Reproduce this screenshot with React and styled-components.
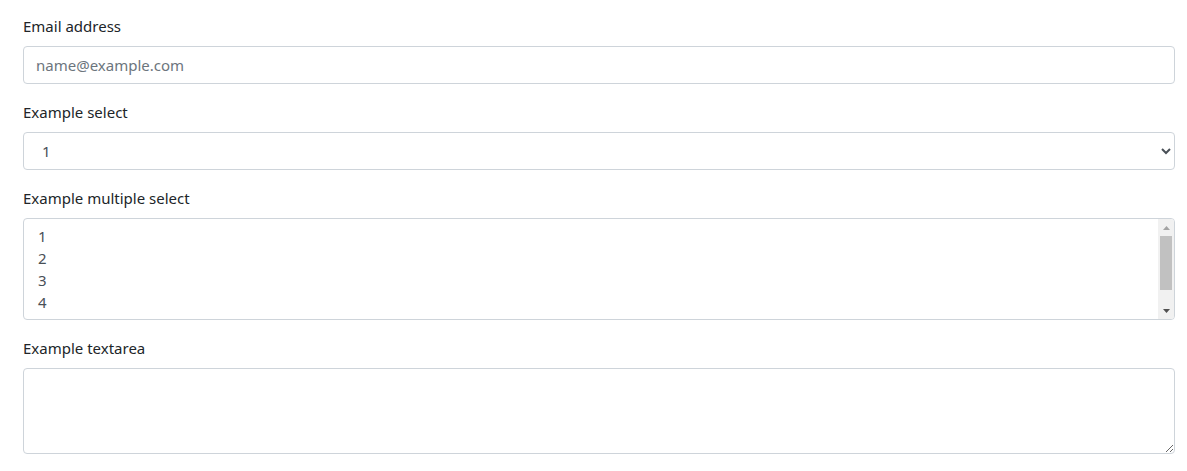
import React from 'react';
import styled, { createGlobalStyle } from 'styled-components';

const GlobalStyle = createGlobalStyle`
  html, body {
    margin: 0;
    background: #fff;
  }
  body {
    font-family: "Segoe UI", "Noto Sans", "Liberation Sans", sans-serif;
    font-size: 16px;
    line-height: 1.5;
    color: #212529;
  }
`;

// 폼 전체
const Container = styled.form`
  padding: 14px 12px 0 23px;
  width: 1152px;
`;

const FormGroup = styled.div`
  margin-bottom: 16px;
`;

const Label = styled.label`
  display: inline-block;
  margin-bottom: 8px;
  font-size: 15px;
  line-height: 24px;
  color: #212529;
`;

const fieldBase = `
  display: block;
  width: 100%;
  box-sizing: border-box;
  padding: 6px 12px;
  font-family: inherit;
  font-size: 15px;
  line-height: 24px;
  color: #495057;
  background-color: #fff;
  border: 1px solid #ced4da;
  border-radius: 4px;
  outline: none;
`;

const Input = styled.input`
  ${fieldBase}
  height: 38px;

  &::placeholder {
    color: #6c757d;
  }
`;

const Select = styled.select`
  ${fieldBase}
  height: 38px;
  padding-left: 14px;
`;

// 다중 선택 리스트박스 (스크롤바 포함)
const ListBox = styled.div`
  ${fieldBase}
  height: 102px;
  padding: 0;
  display: flex;
  overflow: hidden;
`;

const OptionList = styled.div`
  flex: 1;
  padding: 6px 12px;
  overflow: hidden;
`;

const OptionItem = styled.div`
  padding: 0 2px;
  line-height: 22px;
  height: 22px;
  cursor: default;
`;

const ScrollBar = styled.div`
  width: 16px;
  display: flex;
  flex-direction: column;
  background: #f1f1f1;
`;

const ScrollButton = styled.div`
  height: 17px;
  display: flex;
  align-items: center;
  justify-content: center;
`;

const Thumb = styled.div`
  height: 54px;
  margin: 0 2px;
  background: #c1c1c1;
`;

const TrackRest = styled.div`
  flex: 1;
`;

const TextArea = styled.textarea`
  ${fieldBase}
  height: 86px;
  resize: vertical;
`;

const Arrow = ({ up, color }) => (
  <svg width="7" height="4" viewBox="0 0 7 4">
    <path d={up ? 'M0 4L3.5 0L7 4Z' : 'M0 0L3.5 4L7 0Z'} fill={color} />
  </svg>
);

const numbers = ['1', '2', '3', '4', '5'];
// 리스트박스에 보이는 항목 (스크롤 위치 맨 위)
const visibleNumbers = numbers.slice(0, 4);

const App = () => {
  return (
    <>
      <GlobalStyle />
      <Container>
        <FormGroup>
          <Label htmlFor="email">Email address</Label>
          <Input id="email" type="email" placeholder="name@example.com" />
        </FormGroup>

        <FormGroup>
          <Label htmlFor="select1">Example select</Label>
          <Select id="select1">
            {numbers.map((n) => (
              <option key={n}>{n}</option>
            ))}
          </Select>
        </FormGroup>

        <FormGroup>
          <Label id="select2-label">Example multiple select</Label>
          <ListBox role="listbox" aria-multiselectable="true" aria-labelledby="select2-label">
            <OptionList>
              {visibleNumbers.map((n) => (
                <OptionItem key={n} role="option">{n}</OptionItem>
              ))}
            </OptionList>
            <ScrollBar>
              <ScrollButton>
                <Arrow up color="#a3a3a3" />
              </ScrollButton>
              <Thumb />
              <TrackRest />
              <ScrollButton>
                <Arrow color="#505050" />
              </ScrollButton>
            </ScrollBar>
          </ListBox>
        </FormGroup>

        <FormGroup>
          <Label htmlFor="textarea1">Example textarea</Label>
          <TextArea id="textarea1" rows={3} />
        </FormGroup>
      </Container>
    </>
  );
};

export default App;
